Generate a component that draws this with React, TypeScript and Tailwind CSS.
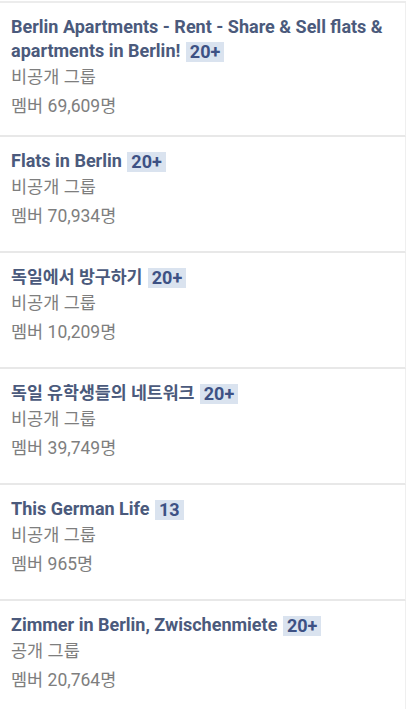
import React from "react";

type Group = { name: string; badge: string; kind: string; members: string; ko?: boolean };

const groups: Group[] = [
  { name: "Berlin Apartments - Rent - Share & Sell flats & apartments in Berlin!", badge: "20+", kind: "비공개 그룹", members: "멤버 69,609명" },
  { name: "Flats in Berlin", badge: "20+", kind: "비공개 그룹", members: "멤버 70,934명" },
  { name: "독일에서 방구하기", badge: "20+", kind: "비공개 그룹", members: "멤버 10,209명", ko: true },
  { name: "독일 유학생들의 네트워크", badge: "20+", kind: "비공개 그룹", members: "멤버 39,749명", ko: true },
  { name: "This German Life", badge: "13", kind: "비공개 그룹", members: "멤버 965명" },
  { name: "Zimmer in Berlin, Zwischenmiete", badge: "20+", kind: "공개 그룹", members: "멤버 20,764명" },
];

export default function App() {
  return (
    <div
      className="w-[406px] h-[709px] bg-white overflow-hidden pt-px"
      style={{ fontFamily: 'Roboto, "Noto Sans CJK KR", sans-serif' }}
    >
      <div className="border-t-2 border-[#ececec]" />
      {groups.map((g, i) => (
        <div
          key={i}
          className={
            i === 0
              ? "border-b-2 border-[#e8e8e8] border-r border-r-[#efefef] pl-[11px] pr-2 pt-[12px] pb-[14px]"
              : "border-b-2 border-[#e8e8e8] border-r border-r-[#efefef] pl-[11px] pr-2 pt-[12px] pb-[20px]"
          }
        >
          <div
            className={
              g.ko
                ? "text-[17.3px] leading-[24px] font-bold text-[#4b5a7c]"
                : "text-[18px] leading-[24px] font-bold text-[#4b5a7c]"
            }
          >
            {g.name}{" "}
            <span className="ml-px inline-block bg-[#dae3ef] text-[#3d5184] text-[18px] px-[4px] leading-[20px] align-[-1px]">{g.badge}</span>
          </div>
          <div className="text-[17.5px] leading-[28px] text-[#7e7e7e]">{g.kind}</div>
          <div className="text-[17.5px] leading-[30px] text-[#7e7e7e]">{g.members}</div>
        </div>
      ))}
    </div>
  );
}
